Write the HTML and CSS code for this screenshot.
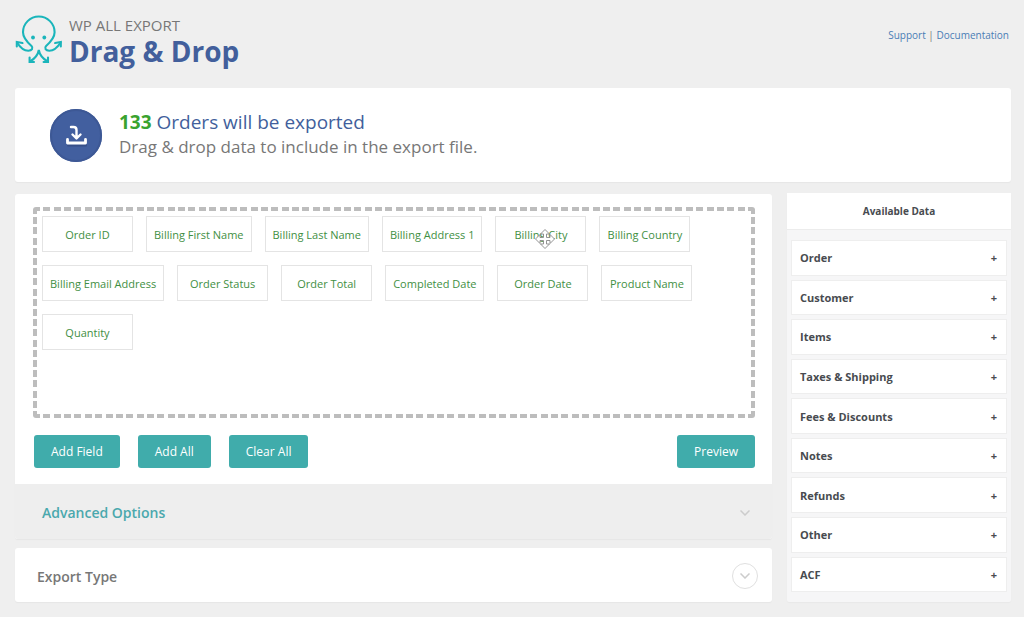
FILE: index.html
```html
<!DOCTYPE html>
<html lang="en">
<head>
<meta charset="utf-8">
<title>WP All Export – Drag &amp; Drop</title>
<link rel="stylesheet" href="styles.css">
</head>
<body>
<header class="header">
  <div class="brand">
    <svg class="logo" viewBox="0 0 46 50" width="46" height="50" fill="none" stroke="#1ab5bb" stroke-width="2.1" stroke-linecap="round" aria-hidden="true">
      <path d="M2 27.500C4.500 31.500 8 35.700 13.300 35.700 17 35.700 18.500 33 16.500 31 12 27 8 23 8 17.300a15.800 15.800 0 0 1 31.600 0C39.600 23 35.600 27 31.100 31 29.100 33 30.600 35.700 34.300 35.700 39.600 35.700 43.100 31.500 45.600 27.500"/>
      <path d="M1.800 31.500V27L7.500 28M45.800 31.500V27L40.100 28"/>
      <path d="M15 46.500C20 43.500 23 40 23.800 35 24.600 40 27.600 43.500 32.600 46.500"/>
      <path d="M14.600 42.500V47H19M33 42.500V47H28.600"/>
      <circle cx="18" cy="22.500" r="1.900" fill="#1ab5bb" stroke="none"/>
      <circle cx="29.300" cy="22.500" r="1.900" fill="#1ab5bb" stroke="none"/>
    </svg>
    <div>
      <p class="product">WP ALL EXPORT</p>
      <h1 class="title">Drag &amp; Drop</h1>
    </div>
  </div>
  <nav class="links"><a href="#support">Support</a> | <a href="#docs">Documentation</a></nav>
</header>

<section class="card banner">
  <span class="badge">
    <svg viewBox="0 0 24 24" width="24" height="24" fill="none" stroke-linecap="round" stroke-linejoin="round" aria-hidden="true">
      <path d="M4 21.500h18" stroke="#364f88" stroke-width="2"/>
      <path d="M7 3h2.500q3 0 3 3v8M8.500 10.500l4 4 4-4" stroke="#fff" stroke-width="2.400"/>
      <path d="M3.500 15.500v3.500h18v-3.500" stroke="#fff" stroke-width="2.800"/>
    </svg>
  </span>
  <div>
    <h2 class="count"><strong>133</strong> Orders will be exported</h2>
    <p class="hint">Drag &amp; drop data to include in the export file.</p>
  </div>
</section>

<div class="columns">
  <main class="main">
    <section class="card builder">
      <div class="workspace">
        <ul class="dropzone">
          <li class="field">Order ID</li>
          <li class="field">Billing First Name</li>
          <li class="field">Billing Last Name</li>
          <li class="field">Billing Address 1</li>
          <li class="field">Billing City
            <svg class="cursor" viewBox="0 0 20 20" width="20" height="20" aria-hidden="true"><path d="M10 .5 14.500 5H11.500V8.500H15V5.500L19.500 10 15 14.500V11.500H11.500V15H14.500L10 19.500 5.500 15H8.500V11.500H5V14.500L.5 10 5 5.500V8.500H8.500V5H5.500z" fill="#fff" stroke="#888" stroke-width=".9"/></svg>
          </li>
          <li class="field">Billing Country</li>
          <li class="field">Billing Email Address</li>
          <li class="field">Order Status</li>
          <li class="field">Order Total</li>
          <li class="field">Completed Date</li>
          <li class="field">Order Date</li>
          <li class="field">Product Name</li>
          <li class="field">Quantity</li>
        </ul>
        <div class="actions">
          <button class="button" type="button">Add Field</button>
          <button class="button" type="button">Add All</button>
          <button class="button" type="button">Clear All</button>
          <button class="button preview" type="button">Preview</button>
        </div>
      </div>
      <button class="advanced" type="button">Advanced Options
        <svg class="chevron" viewBox="0 0 10 6" width="10" height="6" aria-hidden="true"><path d="M.5.500 5 5 9.500.500"/></svg>
      </button>
    </section>
    <button class="card export" type="button">Export Type
      <span class="ring"><svg class="chevron" viewBox="0 0 10 6" width="10" height="6" aria-hidden="true"><path d="M.5.500 5 5 9.500.500"/></svg></span>
    </button>
  </main>

  <aside class="sidebar">
    <h2 class="sidebar-title">Available Data</h2>
    <div class="groups">
      <button class="group" type="button">Order <span>+</span></button>
      <button class="group" type="button">Customer <span>+</span></button>
      <button class="group" type="button">Items <span>+</span></button>
      <button class="group" type="button">Taxes &amp; Shipping <span>+</span></button>
      <button class="group" type="button">Fees &amp; Discounts <span>+</span></button>
      <button class="group" type="button">Notes <span>+</span></button>
      <button class="group" type="button">Refunds <span>+</span></button>
      <button class="group" type="button">Other <span>+</span></button>
      <button class="group" type="button">ACF <span>+</span></button>
    </div>
  </aside>
</div>
</body>
</html>
```
FILE: styles.css
```css
* { box-sizing: border-box; }
body {
  margin: 0;
  padding: 15px 13px 15px 15px;
  background: #efefef;
  color: #777;
  font-family: "Segoe UI", "Open Sans", "Noto Sans", sans-serif;
  font-size: 11px;
}
h1, h2, p, ul { margin: 0; padding: 0; }
button { font-family: inherit; border: 0; text-align: left; cursor: pointer; }
.card { background: #fff; border-radius: 3px; box-shadow: 0 1px 1px #e6e6e6; }

.header { display: flex; justify-content: space-between; height: 73px; }
.brand { display: flex; gap: 8px; }
.logo { overflow: visible; }
.product { font-size: 15px; line-height: 20px; }
.title { font-size: 28px; line-height: 32px; color: #425f9c; }
.links { padding: 12px 2px 0 0; line-height: 16px; font-size: 10px; }
.links a { color: #4a7db5; text-decoration: none; }

.banner { display: flex; gap: 17px; padding: 21px 35px 20px; }
.badge {
  display: flex; align-items: center; justify-content: center;
  width: 52px; height: 53px; border-radius: 50%;
  background: #425f9f; box-shadow: inset 0 0 0 2px #3d5895;
}
.count { font-size: 19px; line-height: 26px; font-weight: 400; color: #425f9c; }
.count strong { color: #3aa32f; }
.hint { font-size: 17px; line-height: 23px; }

.columns { display: flex; gap: 15px; margin-top: 11px; }
.main { flex: 1; display: flex; flex-direction: column; gap: 9px; padding-top: 1px; }
.builder { overflow: hidden; }
.workspace { padding: 13px 17px 16px 18px; }
.dropzone {
  --dash: #bdbdbd;
  --across: repeating-linear-gradient(90deg, var(--dash) 0 7px, transparent 7px calc((100% - 7px) / 69));
  --down: repeating-linear-gradient(180deg, var(--dash) 0 7px, transparent 7px calc((100% - 7px) / 20));
  display: flex; flex-wrap: wrap; align-content: flex-start; gap: 13px;
  min-height: 211px; padding: 9px; list-style: none;
  border-radius: 3px;
  background:
    var(--across) top / 100% 4px no-repeat,
    var(--across) bottom / 100% 4px no-repeat,
    var(--down) left / 4px 100% no-repeat,
    var(--down) right / 4px 100% no-repeat;
}
.field {
  position: relative;
  min-width: 91px; height: 36px; padding: 0 7px;
  border: 1px solid #e4e4e4; background: #fff; color: #3f8f43;
  line-height: 36px; text-align: center; white-space: nowrap; cursor: move;
}
.cursor { position: absolute; left: 39px; top: 12px; }
.actions { display: flex; gap: 18px; margin-top: 17px; padding-left: 1px; }
.button {
  height: 33px; padding: 0 17px; border-radius: 3px;
  background: #40acab; color: #fff; font-size: 12px;
}
.preview { margin-left: auto; }
.advanced, .export { display: flex; align-items: center; justify-content: space-between; width: 100%; }
.advanced {
  height: 55px; padding: 2px 22px 0 27px;
  background: #eee; color: #4aa8ad; font-size: 14px; font-weight: 600;
}
.export { height: 54px; padding: 2px 14px 0 22px; color: #777; font-size: 14px; font-weight: 600; }
.ring {
  display: flex; align-items: center; justify-content: center;
  width: 26px; height: 26px; border: 1px solid #e0e0e0; border-radius: 50%;
}
.chevron { fill: none; stroke: #ccc; stroke-width: 1.5; }

.sidebar {
  display: flex; flex-direction: column; width: 224px;
  background: #f6f6f7; border-radius: 2px; box-shadow: 0 1px 1px #e8e8e8;
}
.sidebar-title {
  background: #fff; border-bottom: 1px solid #ececec; color: #484b50;
  font-size: 10px; line-height: 36px; text-align: center;
}
.groups { flex: 1; display: flex; flex-direction: column; gap: 4px; padding: 10px 4px; }
.group {
  flex: 1; display: flex; justify-content: space-between; align-items: center;
  min-height: 30px; padding: 0 9px 0 8px; background: #fff; border: 1px solid #eee;
  color: #484b50; font-size: 11px; font-weight: 700;
}
```
